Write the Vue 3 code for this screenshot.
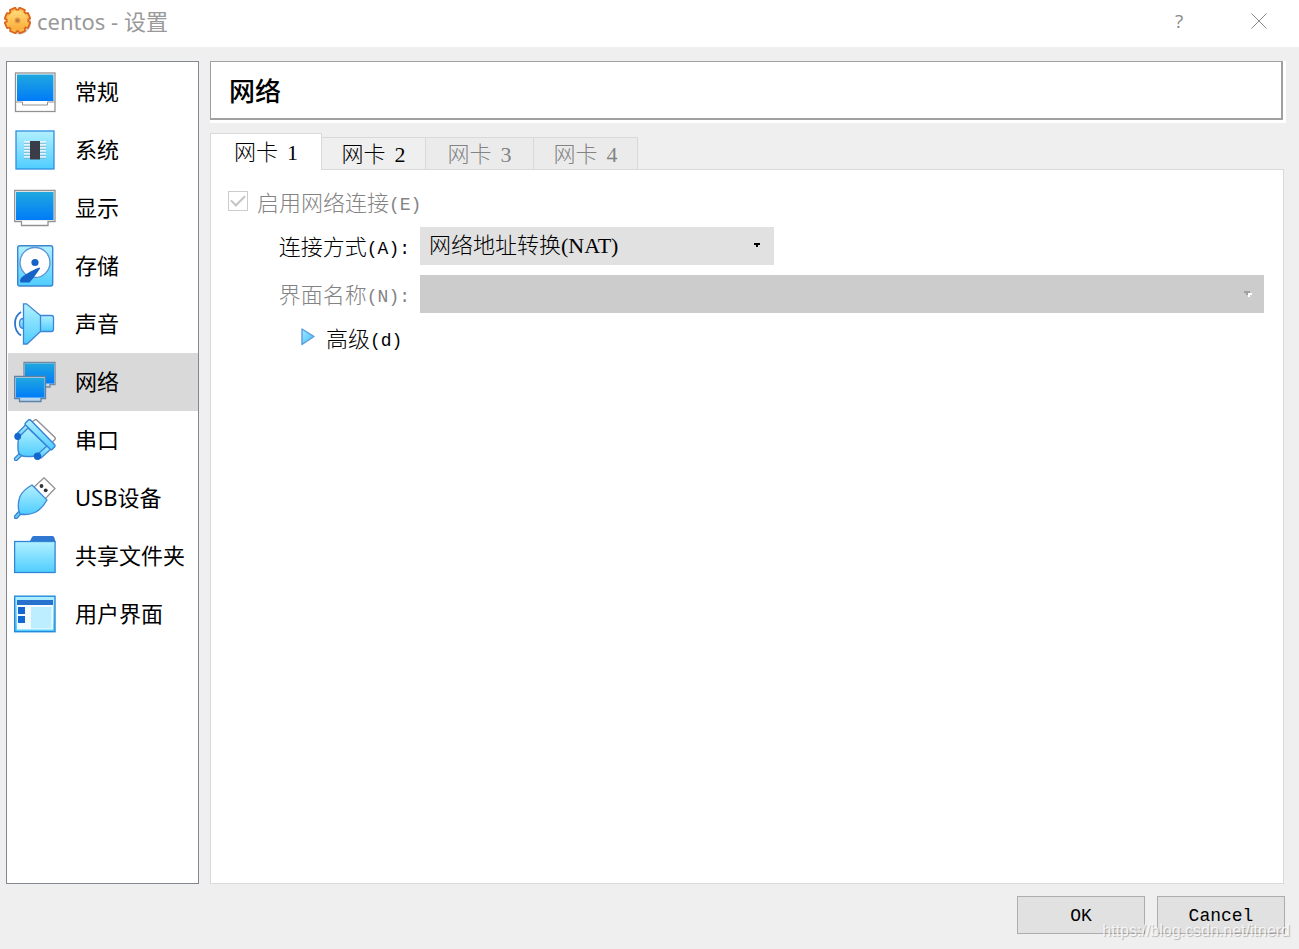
<script setup>
import { ref } from 'vue'

const sections = [
  { id: 'general', label: '常规' },
  { id: 'system', label: '系统' },
  { id: 'display', label: '显示' },
  { id: 'storage', label: '存储' },
  { id: 'audio', label: '声音' },
  { id: 'network', label: '网络' },
  { id: 'serial', label: '串口' },
  { id: 'usb', label: 'USB设备' },
  { id: 'folders', label: '共享文件夹' },
  { id: 'ui', label: '用户界面' },
]
const current = ref('network')
const tabs = [
  { n: 1, disabled: false },
  { n: 2, disabled: false },
  { n: 3, disabled: true },
  { n: 4, disabled: true },
]
const activeTab = ref(1)
const attached = ref('nat')
const teeth = [0, 45, 90, 135, 180, 225, 270, 315]
const pins = [13, 16, 19, 22, 25, 28]
</script>

<template>
  <div class="window">
    <header class="titlebar">
      <svg class="gear" viewBox="0 0 28 28" aria-hidden="true">
        <defs>
          <linearGradient id="gGear" x1="0" y1="0" x2="0" y2="1">
            <stop offset="0" stop-color="#ffdc78" />
            <stop offset="1" stop-color="#fba938" />
          </linearGradient>
        </defs>
        <circle cx="15" cy="15.5" r="12" fill="#000" opacity="0.18" />
        <g fill="#dc661c">
          <circle cx="13.5" cy="13.5" r="11.7" />
          <rect v-for="a in teeth" :key="a" x="9.5" y="0" width="8" height="7" rx="1.5" :transform="`rotate(${a + 22} 13.5 13.5)`" />
        </g>
        <g fill="#fbbc50">
          <rect v-for="a in teeth" :key="a" x="11" y="1.8" width="5" height="6" rx="1" :transform="`rotate(${a + 22} 13.5 13.5)`" />
        </g>
        <circle cx="13.5" cy="13.5" r="10" fill="url(#gGear)" />
        <circle cx="13.5" cy="13.5" r="3" fill="#e59a3c" />
        <circle cx="13.5" cy="13.5" r="1.5" fill="#b5764a" />
      </svg>
      <h1>centos - 设置</h1>
      <button class="caption" type="button" aria-label="帮助">?</button>
      <button class="caption" type="button" aria-label="关闭">
        <svg viewBox="0 0 16 16" width="16" height="16"><path d="M.5 .5L15.5 15.5M15.5 .5L.5 15.5" stroke="#8a8a8a" fill="none" /></svg>
      </button>
    </header>

    <div class="body">
      <nav class="sidebar">
        <button
          v-for="s in sections"
          :key="s.id"
          type="button"
          class="item"
          :class="{ selected: s.id === current }"
          @click="current = s.id"
        >
          <svg class="icon" viewBox="0 0 42 42" aria-hidden="true">
            <defs>
              <linearGradient :id="'d' + s.id" x1="0" y1="0" x2="0" y2="1">
                <stop offset="0" stop-color="#20a8df" />
                <stop offset="1" stop-color="#007bf8" />
              </linearGradient>
              <linearGradient :id="'l' + s.id" x1="0" y1="0" x2="0" y2="1">
                <stop offset="0" stop-color="#b2f0ff" />
                <stop offset="1" stop-color="#4fcdff" />
              </linearGradient>
            </defs>
            <template v-if="s.id === 'general'">
              <rect x="1.5" y="2" width="39.5" height="38.5" fill="#fff" stroke="#929292" stroke-width="1.3" />
              <rect x="3" y="3.5" width="36.5" height="26.5" :fill="`url(#d${s.id})`" />
              <path d="M2 31H8.500V34H33.500V31H40.500" fill="none" stroke="#929292" />
            </template>
            <template v-else-if="s.id === 'system'">
              <rect x="2" y="2" width="38" height="38" :fill="`url(#l${s.id})`" stroke="#2f8ee0" stroke-width="1.3" />
              <path v-for="p in pins" :key="p" :d="`M10 ${p}H32`" stroke="#fff" stroke-width="1.5" />
              <path v-for="p in pins" :key="'s' + p" :d="`M10 ${p + 1.2}H32`" stroke="#6f9fb8" stroke-width=".6" />
              <rect x="16" y="12" width="10" height="18.5" fill="#3a3d48" />
            </template>
            <template v-else-if="s.id === 'display'">
              <path d="M.7 3.500H41V34.500H34V38.500H7.500V34.500H.7Z" fill="#fff" stroke="#929292" stroke-width="1.3" />
              <rect x="1.5" y="4.5" width="38.5" height="29" fill="#dcdcdc" />
              <rect x="2" y="5" width="37.5" height="28" :fill="`url(#d${s.id})`" />
            </template>
            <template v-else-if="s.id === 'storage'">
              <rect x="3.7" y=".7" width="35" height="40.300" rx="2" :fill="`url(#l${s.id})`" stroke="#3a86d2" stroke-width="1.4" />
              <circle cx="21" cy="17.5" r="15" fill="#fff" stroke="#5a93d8" stroke-width="1.3" />
              <circle cx="21" cy="17.5" r="3.6" fill="#1663c7" />
              <path d="M26 22.500C22 23 12 29 8 32Q5 35 6.500 37.500H15.500Q19 34 26 23.500Z" fill="#1663c7" />
            </template>
            <template v-else-if="s.id === 'audio'">
              <g :fill="`url(#l${s.id})`" stroke="#3f84d6" stroke-width="1.3">
                <path d="M9.500 15.500Q5.500 15.500 5.500 20.500T9.500 25.500Z" />
                <path d="M26 12.500H37.500Q39.500 12.500 39.500 15V26Q39.500 28.500 37.500 28.500H26Z" />
                <path d="M9.500 .8H12.500L26.500 12.500V28.500L13 41H9.500Z" />
              </g>
              <path d="M7 9Q1 12.500 1 20.500T7 32.500" fill="none" stroke="#2d74cd" stroke-width="1.8" />
            </template>
            <template v-else-if="s.id === 'network'">
              <path d="M10 1.500H41V23.500H36V26H28V23.500H10Z" fill="#c8d8e6" stroke="#708ba4" stroke-width="1.3" />
              <rect x="11" y="2.5" width="29" height="20" :fill="`url(#d${s.id})`" />
              <path d="M.7 15.500H31.500V37.500H27V40.500H5.500V37.500H.7Z" fill="#b4d6f2" stroke="#5f82a3" stroke-width="1.3" />
              <rect x="2" y="17" width="28.5" height="19.5" :fill="`url(#d${s.id})`" />
            </template>
            <template v-else-if="s.id === 'serial'">
              <path d="M18 3L21 .8Q22 .3 23 1.300L41 18.500Q41.800 20 40.500 21L38 23.500" fill="#fff" stroke="#929292" stroke-width="1.4" />
              <path d="M2 40L8 34" stroke="#347bd0" stroke-width="4.500" stroke-linecap="round" />
              <path d="M2 40L8 34" stroke="#72d4fa" stroke-width="2" stroke-linecap="round" />
              <g :fill="`url(#l${s.id})`" stroke="#3f86d5" stroke-width="1.4" stroke-linejoin="round">
                <path d="M12 5.500L3 14.500L7 19L17 10Z" />
                <path d="M37 30L27 39L22.500 34.500L31.500 25Z" />
                <path d="M14 9L7 16Q4 19 4 24V30Q4 37.500 12 37.500H17Q22 37.500 25 34L33 27Z" />
                <path d="M14.500 .9Q16 .3 17 1.500L40.500 25.500Q41.500 27 40.500 28L38 30.500Q37 31 36 30L11.500 6Q10.500 5 11.500 4Z" stroke="#3483d9" />
              </g>
              <circle cx="3.7" cy="17.5" r="3.4" fill="#1465cd" />
              <circle cx="23.5" cy="37.3" r="3.7" fill="#1465cd" />
            </template>
            <template v-else-if="s.id === 'usb'">
              <path d="M30 .8L41 11.500L31 22L20 10Z" fill="#fff" stroke="#929292" stroke-width="1.3" />
              <circle cx="27.5" cy="9" r="1.9" fill="#333" />
              <circle cx="31.7" cy="13.3" r="1.9" fill="#333" />
              <path d="M2 40L5.500 36" stroke="#347bd0" stroke-width="4.500" stroke-linecap="round" />
              <path d="M2 40L6 35.500" stroke="#62cbf5" stroke-width="2" stroke-linecap="round" />
              <path d="M18 8L33 23Q28 32 21 35.500Q14 38.500 6 37Q2.500 29 6 19.500Q9 13 18 8Z" :fill="`url(#l${s.id})`" stroke="#3f86d5" stroke-width="1.3" />
            </template>
            <template v-else-if="s.id === 'folders'">
              <path d="M15.500 7L18 2Q18.500 1 20 1H38.500Q40 1 40.500 3L41.500 7Z" fill="#2f77d0" />
              <rect x=".6" y="6.5" width="40.5" height="31" :fill="`url(#l${s.id})`" stroke="#2f86d6" stroke-width="1.3" />
            </template>
            <template v-else>
              <rect x=".7" y="3.2" width="40.3" height="35.5" :fill="`url(#l${s.id})`" stroke="#2588d8" stroke-width="1.4" />
              <rect x="3" y="7" width="36" height="29.5" fill="#f4fcff" />
              <rect x="3" y="7" width="36" height="5" fill="#2872cf" />
              <path d="M4 14H11V21H4ZM4 23H11V30H4Z" fill="#1267d2" />
              <rect x="17" y="14" width="20.5" height="21.5" fill="#bdeeff" />
            </template>
          </svg>
          <span>{{ s.label }}</span>
        </button>
      </nav>

      <main class="main">
        <h2 class="heading">网络</h2>
        <div class="tabs" role="tablist">
          <button
            v-for="t in tabs"
            :key="t.n"
            type="button"
            role="tab"
            class="tab"
            :class="{ active: t.n === activeTab }"
            :aria-selected="t.n === activeTab"
            :disabled="t.disabled"
            @click="activeTab = t.n"
          >网卡 <span class="digit">{{ t.n }}</span></button>
        </div>
        <section class="panel" role="tabpanel">
          <label class="enable">
            <input type="checkbox" checked disabled />
            <span>启用网络连接<span class="latin">(E)</span></span>
          </label>
          <div class="form">
            <label for="attached">连接方式<span class="latin">(A):</span></label>
            <div class="combo narrow">
              <select id="attached" v-model="attached">
                <option value="nat">网络地址转换(NAT)</option>
              </select>
              <svg class="arrow" viewBox="0 0 8 5" shape-rendering="crispEdges"><path d="M0 0H6V2H4V4H2V2H0Z" fill="#000" /></svg>
            </div>
            <label for="ifname" class="off">界面名称<span class="latin">(N):</span></label>
            <div class="combo">
              <select id="ifname" disabled></select>
              <svg class="arrow" viewBox="0 0 8 6" shape-rendering="crispEdges">
                <path d="M4 2H8V4H6V6H4Z" fill="#fff" /><path d="M0 0H6V2H4V4H2V2H0Z" fill="#a0a0a0" />
              </svg>
            </div>
          </div>
          <button type="button" class="advanced">
            <svg viewBox="0 0 14 18" width="14" height="18" aria-hidden="true">
              <defs><linearGradient id="gTri" x1="0" y1="0" x2="1" y2="1"><stop offset="0" stop-color="#a5e9ff" /><stop offset="1" stop-color="#39bdfb" /></linearGradient></defs>
              <path d="M1 1L13 8.500L1 16.500Z" fill="url(#gTri)" stroke="#5b9bdc" stroke-width="1.4" stroke-linejoin="round" />
            </svg>
            <span>高级<span class="latin">(d)</span></span>
          </button>
        </section>
      </main>
    </div>

    <footer class="footer">
      <button type="button" class="push">OK</button>
      <button type="button" class="push">Cancel</button>
    </footer>
    <div class="watermark">https://blog.csdn.net/itnerd</div>
  </div>
</template>

<style>
body {
  margin: 0;
  background: #efefef;
}
</style>

<style scoped>
* {
  box-sizing: border-box;
}
.window {
  position: relative;
  display: flex;
  flex-direction: column;
  min-height: 100vh;
  background: #efefef;
  color: #000;
  font-family: "Noto Sans CJK SC", sans-serif;
  font-size: 22px;
  font-weight: 300;
  line-height: 32px;
}
button,
select {
  margin: 0;
  padding: 0;
  border: 0;
  background: none;
  color: inherit;
  font: inherit;
}
.latin {
  font-family: "Liberation Mono", monospace;
  font-size: 18px;
  line-height: 18px;
  vertical-align: 1px;
}
.digit {
  margin-left: 4px;
  font-family: "Liberation Serif", serif;
  line-height: 18px;
}
.titlebar {
  display: flex;
  align-items: center;
  height: 47px;
  padding: 0 0 6px 4px;
  background: #fff;
  color: #999;
}
.gear {
  width: 28px;
  height: 28px;
  margin-right: 5px;
}
.titlebar h1 {
  flex: 1;
  margin: 0;
  font: 400 22px/32px "Noto Sans", "Noto Sans CJK SC", sans-serif;
}
.caption {
  display: flex;
  align-items: center;
  justify-content: center;
  width: 80px;
  height: 40px;
  color: #8a8a8a;
  font: 400 19px/40px "Open Sans", sans-serif;
}
.body {
  flex: 1;
  display: flex;
  gap: 11px;
  padding: 14px 15px 0 6px;
}
.sidebar {
  flex: none;
  width: 193px;
  padding: 1px 0 0 1px;
  border: 1px solid #828790;
  background: #fff;
  font-family: "Noto Sans", "Noto Sans CJK SC", sans-serif;
  font-weight: 400;
}
.item {
  display: flex;
  align-items: center;
  width: 100%;
  height: 58px;
  padding-left: 6px;
  gap: 19px;
  text-align: left;
  white-space: nowrap;
}
.item span {
  padding-bottom: 3px;
}
.item.selected {
  background: #d9d9d9;
}
.icon {
  flex: none;
  width: 42px;
  height: 42px;
}
.main {
  flex: 1;
  display: flex;
  flex-direction: column;
  min-width: 0;
}
.heading {
  height: 59px;
  margin: 0 1px 13px 0;
  padding-left: 18px;
  border: 1px solid #a0a0a0;
  border-width: 1px 2px 2px 1px;
  background: #fff;
  box-shadow: 3px 0 0 #fff, 0 3px 0 #fff, 3px 3px 0 #fff;
  font-size: 26px;
  font-weight: 500;
  line-height: 56px;
}
.tabs {
  position: relative;
  z-index: 1;
  display: grid;
  grid-template-columns: 112px 104px 108px 104px;
  align-items: end;
  height: 37px;
  margin-bottom: -1px;
}
.tab {
  height: 33px;
  padding-bottom: 4px;
  border: 1px solid #d9d9d9;
  border-left: 0;
  background: #efefef;
  line-height: 28px;
}
.tab:disabled {
  background: #ebebeb;
  color: #838383;
}
.tab.active {
  height: 37px;
  border-left: 1px solid #d9d9d9;
  border-bottom: 0;
  background: #fff;
}
.panel {
  flex: 1;
  padding: 15px 19px 16px 17px;
  border: 1px solid #d9d9d9;
  background: #fff;
}
.enable {
  display: flex;
  align-items: center;
  gap: 9px;
  height: 32px;
  color: #838383;
}
.enable input {
  appearance: none;
  width: 20px;
  height: 20px;
  margin: 0;
  border: 1px solid #ccc;
  background: #fff;
  display: grid;
  place-items: center;
}
.enable input:checked::before {
  content: "";
  width: 12px;
  height: 6px;
  margin-bottom: 4px;
  border: solid #c4c4c4;
  border-width: 0 0 2px 2px;
  transform: rotate(-45deg);
}
.form {
  display: grid;
  grid-template-columns: 182px 1fr;
  gap: 10px;
  margin-top: 10px;
  align-items: center;
}
.form label {
  height: 34px;
  text-align: right;
}
.form .off {
  color: #838383;
}
.combo {
  position: relative;
  display: flex;
}
.narrow {
  width: 354px;
}
.combo select {
  appearance: none;
  width: 100%;
  height: 38px;
  padding: 0 40px 0 9px;
  border-radius: 0;
  background: #e1e1e1;
  font-family: "Liberation Serif", "Noto Sans CJK SC", serif;
  opacity: 1;
}
.combo select:disabled {
  background: #ccc;
}
.arrow {
  position: absolute;
  right: 12px;
  top: 16px;
  width: 8px;
  pointer-events: none;
}
.advanced {
  display: flex;
  align-items: center;
  gap: 11px;
  height: 32px;
  margin: 8px 0 0 73px;
}
.footer {
  display: flex;
  justify-content: flex-end;
  gap: 12px;
  padding: 12px 14px 15px;
}
.push {
  width: 128px;
  height: 38px;
  border: 1px solid #adadad;
  background: #e1e1e1;
  font: 400 18px/38px "Liberation Mono", monospace;
}
.watermark {
  position: absolute;
  right: 9px;
  bottom: 8px;
  color: rgba(255, 255, 255, 0.8);
  font: 400 16px/20px "Liberation Sans", sans-serif;
  text-shadow: 1px 1px 1px rgba(0, 0, 0, 0.25);
  pointer-events: none;
}
</style>
